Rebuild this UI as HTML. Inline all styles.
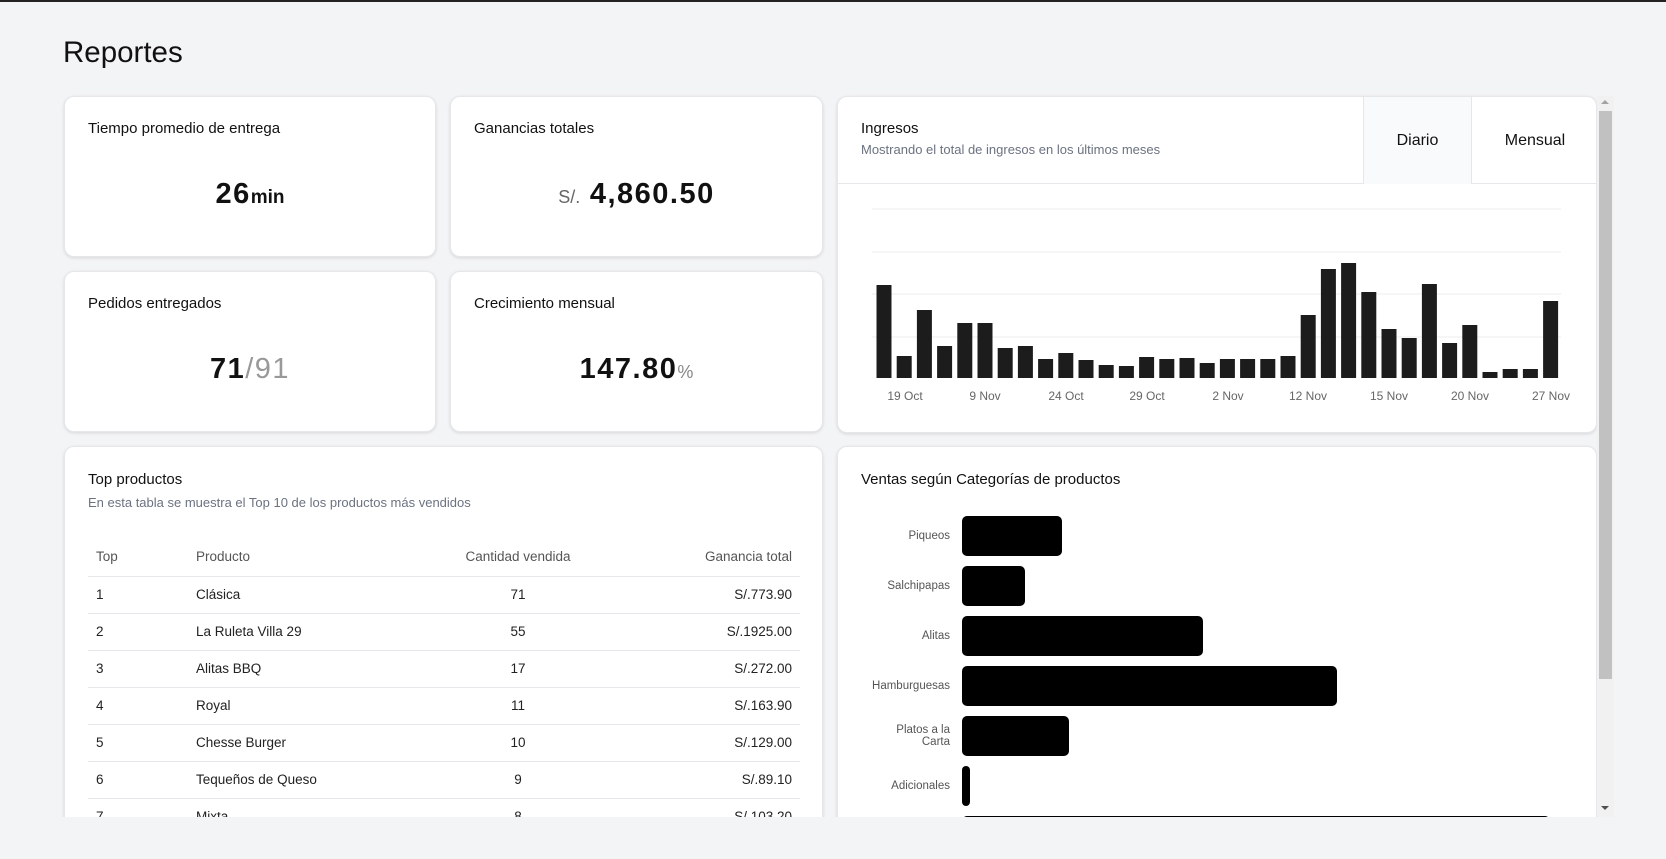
<!DOCTYPE html>
<html><head><meta charset="utf-8">
<style>
*{margin:0;padding:0;box-sizing:border-box}
body{width:1666px;height:859px;background:#f3f4f6;font-family:"Liberation Sans",sans-serif;color:#111;position:relative;overflow:hidden}
.topbar{position:absolute;left:0;top:0;width:1666px;height:2px;background:#222}
h1{position:absolute;left:63px;top:36px;font-size:29.5px;font-weight:400;color:#111}
.card{position:absolute;background:#fff;border:1px solid #e5e7eb;border-radius:10px;box-shadow:0 1px 3px rgba(0,0,0,.12);overflow:hidden}
.lbl{position:absolute;left:23px;top:23px;font-size:15px;color:#111}
.big{position:absolute;left:0;right:0;top:81px;text-align:center;font-size:29px;font-weight:700;letter-spacing:1.5px}
.big .s{font-size:18px;font-weight:400;color:#666;letter-spacing:0}
.big .m{font-size:19px;font-weight:700;letter-spacing:0}
.sub{font-size:13px;color:#6b7280}
table{border-collapse:collapse;position:absolute;left:23px;top:90px;width:712px;font-size:13.5px}
th{font-weight:400;color:#555;height:39px;text-align:left;border-bottom:1px solid #e5e7eb}
td{height:37px;border-bottom:1px solid #e5e7eb;color:#222}
.c{text-align:center}.r{text-align:right;padding-right:8px}
.cat{position:absolute;right:646px;font-size:11.5px;color:#555;text-align:right;line-height:12px}
.hb{position:absolute;left:124px;height:40px;background:#000;border-radius:5px}
</style></head><body>
<div class="topbar"></div>
<h1>Reportes</h1>

<div class="card" style="left:64px;top:96px;width:372px;height:161px">
<div class="lbl">Tiempo promedio de entrega</div>
<div class="big">26<span class="m">min</span></div></div>
<div class="card" style="left:450px;top:96px;width:373px;height:161px">
<div class="lbl">Ganancias totales</div>
<div class="big"><span class="s">S/.</span> 4,860.50</div></div>
<div class="card" style="left:64px;top:271px;width:372px;height:161px">
<div class="lbl">Pedidos entregados</div>
<div class="big">71<span style="font-weight:400;color:#999">/91</span></div></div>
<div class="card" style="left:450px;top:271px;width:373px;height:161px">
<div class="lbl">Crecimiento mensual</div>
<div class="big">147.80<span class="s" style="color:#888">%</span></div></div>

<div class="card" style="left:837px;top:96px;width:760px;height:337px">
<div style="position:absolute;left:23px;top:23px;font-size:15px">Ingresos</div>
<div class="sub" style="position:absolute;left:23px;top:45px">Mostrando el total de ingresos en los últimos meses</div>
<div style="position:absolute;left:0;right:0;top:86px;border-top:1px solid #e5e7eb"></div>
<div style="position:absolute;left:525px;top:0;width:109px;height:87px;background:#f9fafb;border-left:1px solid #e5e7eb;border-right:1px solid #e5e7eb;text-align:center;line-height:87px;font-size:16px">Diario</div>
<div style="position:absolute;left:634px;top:0;width:126px;height:87px;text-align:center;line-height:87px;font-size:16px">Mensual</div>
<svg style="position:absolute;left:0;top:0" width="760" height="337">
<g stroke="#eee" stroke-width="1">
<line x1="34" x2="723" y1="112" y2="112"/><line x1="34" x2="723" y1="155" y2="155"/><line x1="34" x2="723" y1="197" y2="197"/><line x1="34" x2="723" y1="240" y2="240"/></g>
<g font-family="Liberation Sans" font-size="12" fill="#666" text-anchor="middle">
<text x="67" y="303">19 Oct</text><text x="147" y="303">9 Nov</text><text x="228" y="303">24 Oct</text><text x="309" y="303">29 Oct</text><text x="390" y="303">2 Nov</text><text x="470" y="303">12 Nov</text><text x="551" y="303">15 Nov</text><text x="632" y="303">20 Nov</text><text x="713" y="303">27 Nov</text></g>
<g fill="#1c1c1c">
<rect x="38.5" y="188" width="15" height="93"/><rect x="58.7" y="259" width="15" height="22"/><rect x="78.9" y="213" width="15" height="68"/><rect x="99.1" y="249" width="15" height="32"/><rect x="119.3" y="226" width="15" height="55"/><rect x="139.5" y="226" width="15" height="55"/><rect x="159.7" y="251" width="15" height="30"/><rect x="179.9" y="249" width="15" height="32"/><rect x="200.1" y="262" width="15" height="19"/><rect x="220.3" y="256" width="15" height="25"/><rect x="240.5" y="263" width="15" height="18"/><rect x="260.7" y="268" width="15" height="13"/><rect x="280.9" y="269" width="15" height="12"/><rect x="301.1" y="260" width="15" height="21"/><rect x="321.3" y="262" width="15" height="19"/><rect x="341.5" y="261" width="15" height="20"/><rect x="361.7" y="266" width="15" height="15"/><rect x="381.9" y="262" width="15" height="19"/><rect x="402.1" y="262" width="15" height="19"/><rect x="422.3" y="262" width="15" height="19"/><rect x="442.5" y="259" width="15" height="22"/><rect x="462.7" y="218" width="15" height="63"/><rect x="482.9" y="172" width="15" height="109"/><rect x="503.1" y="166" width="15" height="115"/><rect x="523.3" y="195" width="15" height="86"/><rect x="543.5" y="232" width="15" height="49"/><rect x="563.7" y="241" width="15" height="40"/><rect x="583.9" y="187" width="15" height="94"/><rect x="604.1" y="246" width="15" height="35"/><rect x="624.3" y="228" width="15" height="53"/><rect x="644.5" y="275" width="15" height="6"/><rect x="664.7" y="272" width="15" height="9"/><rect x="684.9" y="272" width="15" height="9"/><rect x="705.1" y="204" width="15" height="77"/></g>
</svg>
</div>

<div class="card" style="left:64px;top:446px;width:759px;height:400px">
<div style="position:absolute;left:23px;top:24px;font-size:15px">Top productos</div>
<div class="sub" style="position:absolute;left:23px;top:48px">En esta tabla se muestra el Top 10 de los productos más vendidos</div>
<table>
<tr><th style="width:108px;padding-left:8px">Top</th><th style="width:212px">Producto</th><th class="c" style="width:220px">Cantidad vendida</th><th class="r">Ganancia total</th></tr>
<tr><td style="padding-left:8px">1</td><td>Clásica</td><td class="c">71</td><td class="r">S/.773.90</td></tr>
<tr><td style="padding-left:8px">2</td><td>La Ruleta Villa 29</td><td class="c">55</td><td class="r">S/.1925.00</td></tr>
<tr><td style="padding-left:8px">3</td><td>Alitas BBQ</td><td class="c">17</td><td class="r">S/.272.00</td></tr>
<tr><td style="padding-left:8px">4</td><td>Royal</td><td class="c">11</td><td class="r">S/.163.90</td></tr>
<tr><td style="padding-left:8px">5</td><td>Chesse Burger</td><td class="c">10</td><td class="r">S/.129.00</td></tr>
<tr><td style="padding-left:8px">6</td><td>Tequeños de Queso</td><td class="c">9</td><td class="r">S/.89.10</td></tr>
<tr><td style="padding-left:8px">7</td><td>Mixta</td><td class="c">8</td><td class="r">S/.103.20</td></tr>
</table>
</div>

<div class="card" style="left:837px;top:446px;width:760px;height:400px">
<div style="position:absolute;left:23px;top:24px;font-size:15px">Ventas según Categorías de productos</div>
<div class="cat" style="top:83px">Piqueos</div><div class="hb" style="top:69px;width:100px"></div>
<div class="cat" style="top:133px">Salchipapas</div><div class="hb" style="top:119px;width:63px"></div>
<div class="cat" style="top:183px">Alitas</div><div class="hb" style="top:169px;width:241px"></div>
<div class="cat" style="top:233px">Hamburguesas</div><div class="hb" style="top:219px;width:375px"></div>
<div class="cat" style="top:277px">Platos a la<br>Carta</div><div class="hb" style="top:269px;width:107px"></div>
<div class="cat" style="top:333px">Adicionales</div><div class="hb" style="top:319px;width:8px"></div>
<div class="hb" style="top:369px;width:588px"></div>
</div>

<div style="position:absolute;left:0;top:817px;width:1666px;height:42px;background:#f3f4f6"></div>
<div style="position:absolute;left:1597px;top:96px;width:17px;height:721px;background:#f1f1f1"></div>
<div style="position:absolute;left:1599px;top:111px;width:13px;height:568px;background:#c1c1c1"></div>
<div style="position:absolute;left:1601px;top:100px;width:0;height:0;border-left:4px solid transparent;border-right:4px solid transparent;border-bottom:4px solid #a3a3a3"></div>
<div style="position:absolute;left:1601px;top:806px;width:0;height:0;border-left:4px solid transparent;border-right:4px solid transparent;border-top:4px solid #505050"></div>
</body></html>
